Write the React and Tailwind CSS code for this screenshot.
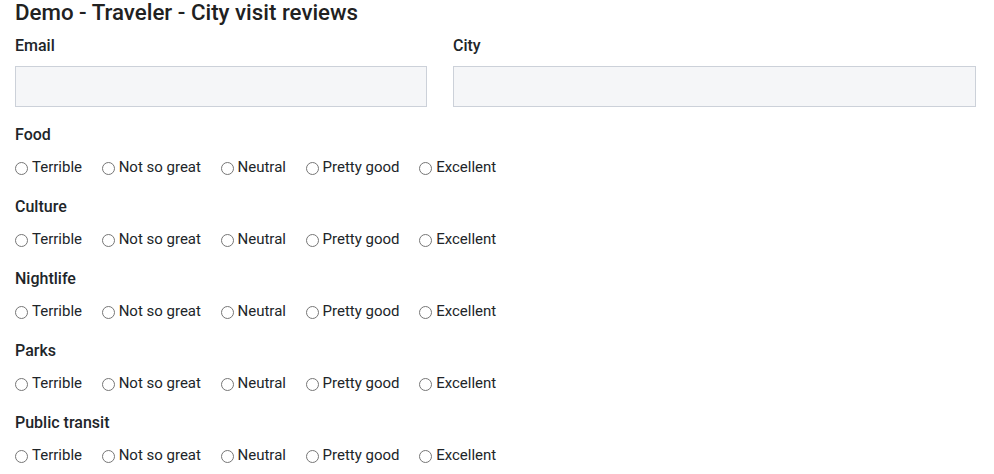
import React from "react";

const options = ["Terrible", "Not so great", "Neutral", "Pretty good", "Excellent"];
const groups = ["Food", "Culture", "Nightlife", "Parks", "Public transit"];

function RadioRow() {
  return (
    <div className="flex items-center h-[20px] mt-3">
      {options.map((o) => (
        <label key={o} className="flex items-center mr-[19.6px] text-[15px] leading-[20px] text-[#212529]">
          <span className="w-[13px] h-[13px] rounded-full border border-[#767676] bg-white mt-[2px]" />
          <span className="ml-[4px]">{o}</span>
        </label>
      ))}
    </div>
  );
}

export default function App() {
  return (
    <div className="bg-white w-[994px] h-[474px] overflow-hidden px-[15px] text-[#212529]" style={{ fontFamily: "Roboto, 'Liberation Sans', sans-serif" }}>
      <h1 className="text-[22.3px] leading-[24px] font-medium text-[#212121]">Demo - Traveler - City visit reviews</h1>
      <div className="flex mt-3">
        <div className="w-[412px]">
          <div className="text-[16px] leading-[20px] font-medium">Email</div>
          <div className="mt-[10px] h-[41px] border border-[#ccd1d9] bg-[#f5f6f8]" />
        </div>
        <div className="w-[523px] ml-[26px]">
          <div className="text-[16px] leading-[20px] font-medium">City</div>
          <div className="mt-[10px] h-[41px] border border-[#ccd1d9] bg-[#f5f6f8]" />
        </div>
      </div>
      <div className="mt-[18px] flex flex-col gap-5">
        {groups.map((g) => (
          <div key={g}>
            <div className="text-[16px] leading-[20px] font-medium">{g}</div>
            <RadioRow />
          </div>
        ))}
      </div>
    </div>
  );
}
